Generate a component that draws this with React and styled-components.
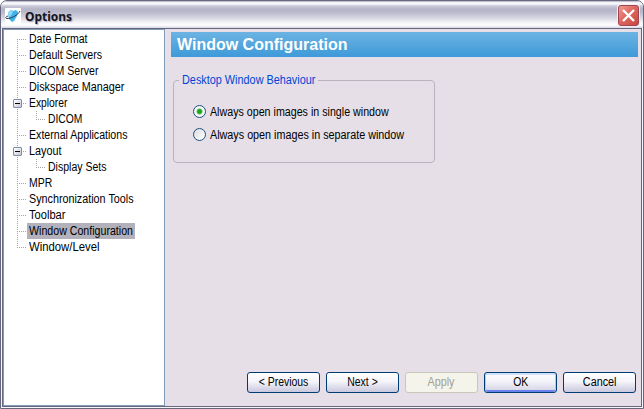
import React from 'react';
import styled, { createGlobalStyle, css } from 'styled-components';

const Global = createGlobalStyle`
  * { box-sizing: border-box; }
  body { margin: 0; overflow: hidden; background: #fff; }
`;

const Frame = styled.div`
  width: 644px;
  height: 409px;
  display: flex;
  flex-direction: column;
  background: #e6dfe7;
  border: 1px solid #66667f;
  border-radius: 7px 7px 0 0;
  padding: 0 1px 1px;
  box-shadow: inset 0 0 0 1px #f6f5fa;
  font-family: 'Liberation Sans', Arial, sans-serif;
  font-size: 12px;
  color: #000;
  overflow: hidden;
`;

const TitleBar = styled.header`
  height: 27px;
  flex: none;
  margin: 0 -1px;
  display: flex;
  align-items: center;
  padding: 0 4px;
  background: linear-gradient(#a9a9bd 0, #dedee9 1px, #fff 2px, #f6f6fa 3px, #c9c9d8 5px, #b5b5c8 8px, #b9b9cb 11px, #d2d2df 16px, #f0f0f5 21px, #fff 24px, #e6e6ef 26px, #d4d4e0 27px);
`;

const AppIcon = styled.svg`
  width: 16px;
  height: 16px;
  flex: none;
  margin-top: 2px;
`;

const Title = styled.h1`
  margin: 2px 0 0 4px;
  flex: 1;
  font: bold 13px/18px 'Noto Sans', 'Open Sans', sans-serif;
  color: #14141c;
  text-shadow: 1px 1px 1px #aaaabc;
  transform: scaleX(0.92);
  transform-origin: left;
`;

const CloseButton = styled.button`
  width: 21px;
  height: 21px;
  flex: none;
  margin-top: 2px;
  padding: 0;
  border: 1px solid #a04450;
  border-radius: 3px;
  background: linear-gradient(135deg, #ef9d91, #df6860 45%, #c7473f);
  box-shadow: 0 0 0 1px #f4eef4;
  svg { display: block; width: 19px; height: 19px; }
`;

const Body = styled.div`
  flex: 1;
  display: flex;
  border: 1px solid #66667f;
  min-height: 0;
`;

const Tree = styled.ul`
  width: 162px;
  flex: none;
  margin: 0;
  padding: 1px 0 0;
  list-style: none;
  background: #fff;
  border: 1px solid #7f9db9;
`;

const dotsX = 'repeating-linear-gradient(90deg, #a5a5a0 0 1px, transparent 1px 2px)';
const dotsY = 'repeating-linear-gradient(#a5a5a0 0 1px, transparent 1px 2px)';

const TreeRow = styled.li`
  height: 16px;
  display: flex;
  align-items: center;
  padding-left: ${(p) => (p.$child ? 42 : 23)}px;
  background-repeat: no-repeat;
  ${(p) => p.$child
    ? css`
        background-image: ${dotsY}, ${dotsY}, ${dotsX};
        background-position: 13px 0, 32px 0, 32px 8px;
        background-size: 1px 16px, 1px 8px, 10px 1px;
      `
    : css`
        background-image: ${dotsY}, ${dotsX};
        background-position: 13px ${p.$first ? 8 : 0}px, 13px 8px;
        background-size: 1px ${p.$last || p.$first ? 8 : 16}px, 10px 1px;
      `}
`;

const Expander = styled.span`
  width: 9px;
  height: 9px;
  flex: none;
  margin: 1px 5px 0 -14px;
  border: 1px solid #7f8fa8;
  border-radius: 1px;
  background:
    linear-gradient(#000, #000) 1px 3px / 5px 1px no-repeat,
    linear-gradient(135deg, #fff, #c9c8d5);
`;

const Text = styled.span`
  display: inline-block;
  white-space: pre;
  line-height: 16px;
  transform: scaleX(${(p) => p.$fit});
  transform-origin: ${(p) => (p.$centered ? 'center' : 'left')};
`;

const TreeLabel = styled.span`
  width: 108px;
  height: 16px;
  padding-left: 2px;
  background: ${(p) => (p.$selected ? '#b2b1bc' : 'transparent')};
`;

const Panel = styled.main`
  flex: 1;
  min-width: 0;
  display: flex;
  flex-direction: column;
  padding: 3px 3px 13px 6px;
`;

const Banner = styled.h2`
  height: 25px;
  flex: none;
  margin: 0;
  padding-left: 6px;
  background: linear-gradient(#6cb3e3, #3e9ad8);
  color: #fff;
  font: bold 16px/25px 'Liberation Sans', Arial, sans-serif;
`;

const Group = styled.fieldset`
  width: 262px;
  height: 91px;
  margin: 15px 0 0 2px;
  padding: 12px 0 0 19px;
  border: 1px solid #b8b3bc;
  border-radius: 4px;
`;

const Legend = styled.legend`
  width: 139px;
  height: 16px;
  margin-left: -14px;
  padding-left: 3px;
  color: #0046d5;
`;

const Option = styled.label`
  height: 23px;
  display: flex;
  align-items: center;
  gap: 4px;
`;

const Radio = styled.span`
  width: 13px;
  height: 13px;
  flex: none;
  border: 1px solid #1c5180;
  border-radius: 50%;
  background: ${(p) => p.$on
    ? 'radial-gradient(circle, #21a121 0 1.6px, #4cc04c 2.6px, #f6f6f8 3.4px)'
    : 'linear-gradient(135deg, #dcdcdf, #fff)'};
`;

const Actions = styled.footer`
  margin: auto 2px 0 0;
  display: flex;
  justify-content: flex-end;
  gap: 6px;
`;

const Button = styled.button`
  width: 73px;
  height: 21px;
  flex: none;
  display: flex;
  align-items: center;
  justify-content: center;
  padding: 0 0 2px;
  border: 1px solid #003c74;
  border-radius: 3px;
  background: linear-gradient(#fff, #f4f4fa 45%, #c9c8de);
  font: inherit;
  color: #000;
  ${(p) => p.$primary && css`
    background: linear-gradient(#fff, #f0f0f8 50%, #d2d1e4);
    box-shadow: inset 0 2px 0 #cee0fb, inset 1px 0 0 #b0c8f4, inset -1px 0 0 #b0c8f4, inset 0 -2px 0 #6982ee;
  `}
  ${(p) => p.$muted && css`
    background: #f5f4ea;
    border-color: #c9c7ba;
    color: #a1a192;
  `}
`;

const rows = [
  { label: 'Date Format', fit: 0.877, first: true },
  { label: 'Default Servers', fit: 0.883 },
  { label: 'DICOM Server', fit: 0.883 },
  { label: 'Diskspace Manager', fit: 0.9 },
  { label: 'Explorer', fit: 0.861, open: true },
  { label: 'DICOM', fit: 0.86, child: true },
  { label: 'External Applications', fit: 0.884 },
  { label: 'Layout', fit: 0.9, open: true },
  { label: 'Display Sets', fit: 0.877, child: true },
  { label: 'MPR', fit: 0.87 },
  { label: 'Synchronization Tools', fit: 0.897 },
  { label: 'Toolbar', fit: 0.926 },
  { label: 'Window Configuration', fit: 0.886, selected: true },
  { label: 'Window/Level', fit: 0.944, last: true },
];

const actions = [
  { label: '< Previous', fit: 0.87 },
  { label: 'Next >', fit: 0.87 },
  { label: 'Apply', fit: 0.9, muted: true },
  { label: 'OK', fit: 0.87, primary: true },
  { label: 'Cancel', fit: 0.9 },
];

export default function App() {
  return (
    <Frame>
      <Global />
      <TitleBar>
        <AppIcon viewBox="0 0 16 16">
          <rect width="16" height="16" rx="1" fill="#fff" />
          <path d="M4 3L7 2L8 3L11 2L13 4L12 8L9 13L7 14L4 11L3 6Z" fill="#3fb2ec" />
          <path d="M4 3L7 2L8 4L5 9L3 7Z" fill="#92d8f6" />
          <path d="M15 3C13 7 6 11 1.500 10.500C0 10 1 8.500 3 8" fill="none" stroke="#30394b" strokeWidth="1" />
        </AppIcon>
        <Title>Options</Title>
        <CloseButton aria-label="Close">
          <svg viewBox="0 0 19 19"><path d="M4 4l11 11M15 4l-11 11" stroke="#fff" strokeWidth="2.4" /></svg>
        </CloseButton>
      </TitleBar>
      <Body>
        <Tree>
          {rows.map((r) => (
            <TreeRow key={r.label} $child={r.child} $first={r.first} $last={r.last}>
              {r.open && <Expander />}
              <TreeLabel $selected={r.selected}><Text $fit={r.fit}>{r.label}</Text></TreeLabel>
            </TreeRow>
          ))}
        </Tree>
        <Panel>
          <Banner>Window Configuration</Banner>
          <Group>
            <Legend><Text $fit={0.905}>Desktop Window Behaviour</Text></Legend>
            <Option><Radio $on /><Text $fit={0.89}>Always open images in single window</Text></Option>
            <Option><Radio /><Text $fit={0.898}>Always open images in separate window</Text></Option>
          </Group>
          <Actions>
            {actions.map((a) => (
              <Button key={a.label} $primary={a.primary} $muted={a.muted}>
                <Text $fit={a.fit} $centered>{a.label}</Text>
              </Button>
            ))}
          </Actions>
        </Panel>
      </Body>
    </Frame>
  );
}
